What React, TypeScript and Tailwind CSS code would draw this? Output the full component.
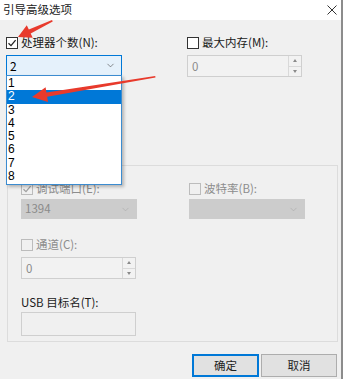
import { ChevronDown } from 'lucide-react';

const ui = { fontFamily: '"Noto Sans CJK SC", "Noto Sans", sans-serif' };

function Box({ checked, disabled }: { checked?: boolean; disabled?: boolean }) {
  return (
    <span
      className={`w-[12px] h-[12px] shrink-0 border flex items-center justify-center ${
        disabled ? 'border-[#bcbcbc] bg-[#f0f0f0]' : 'border-[#333] bg-white'
      }`}
    >
      {checked && (
        <svg width="10" height="10" viewBox="0 0 10 10">
          <path d="M1.5 5.2 L4 7.6 L8.6 2.2" fill="none" stroke={disabled ? '#a0a0a0' : '#222'} strokeWidth="1.3" />
        </svg>
      )}
    </span>
  );
}

function Check({ label, checked, disabled }: { label: string; checked?: boolean; disabled?: boolean }) {
  return (
    <div className="flex items-center gap-[3px] h-[12px]">
      <Box checked={checked} disabled={disabled} />
      <span className={`text-[11.5px] leading-none ${disabled ? 'text-[#8d8d8d]' : 'text-[#1a1a1a]'}`}>{label}</span>
    </div>
  );
}

function Spinner({ value }: { value: string }) {
  return (
    <div className="w-[115px] h-[22px] border border-[#cfcfcf] bg-[#f2f2f2] flex">
      <span className="flex-1 pl-[4px] text-[11.5px] leading-[20px] text-[#8a8a8a]">{value}</span>
      <div className="w-[13px] flex flex-col border-l border-[#d9d9d9]">
        <div className="flex-1 flex items-center justify-center border-b border-[#d9d9d9]">
          <span className="w-0 h-0 border-x-[2.5px] border-x-transparent border-b-[3px] border-b-[#8a8a8a]" />
        </div>
        <div className="flex-1 flex items-center justify-center">
          <span className="w-0 h-0 border-x-[2.5px] border-x-transparent border-t-[3px] border-t-[#8a8a8a]" />
        </div>
      </div>
    </div>
  );
}

function DisabledCombo({ value }: { value: string }) {
  return (
    <div className="w-[116px] h-[20px] bg-[#cccccc] flex items-center justify-between pl-[4px] pr-[6px]">
      <span className="text-[11.5px] text-[#8a8a8a]">{value}</span>
      <ChevronDown size={11} strokeWidth={1.3} color="#a8a8a8" />
    </div>
  );
}

function Arrow({ x, y, angle, len, head, half }: { x: number; y: number; angle: number; len: number; head: number; half: number }) {
  const pts = `0,0 ${head},${-half} ${head},${-2.2} ${len},${-0.8} ${len},0.8 ${head},2.2 ${head},${half}`;
  return <polygon points={pts} fill="#e83a2c" transform={`translate(${x} ${y}) rotate(${angle})`} />;
}

export default function App() {
  const items = ['1', '2', '3', '4', '5', '6', '7', '8'];
  return (
    <div className="relative w-[343px] h-[379px] bg-[#f0f0f0] overflow-hidden border-r-2 border-[#8c8c8c]" style={ui}>
      <div className="h-[20px] bg-white flex items-center justify-between pl-[3px] pr-[4px]">
        <span className="text-[11.5px] text-[#222]">引导高级选项</span>
        <svg width="10" height="10" viewBox="0 0 10 10">
          <path d="M0.5 0.5 L9.5 9.5 M9.5 0.5 L0.5 9.5" stroke="#333" strokeWidth="1" />
        </svg>
      </div>

      <div className="pl-[6px] pt-[17px] flex gap-[65px]">
        <div className="flex flex-col gap-[6px]">
          <Check label="处理器个数(N):" checked />
          <div className="w-[116px] h-[21px] border border-[#0078d7] bg-[#e5f1fb] flex items-center justify-between pl-[3px] pr-[5px]">
            <span className="text-[12px] text-black">2</span>
            <ChevronDown size={11} strokeWidth={1.3} color="#444" />
          </div>
        </div>
        <div className="flex flex-col gap-[6px]">
          <Check label="最大内存(M):" />
          <Spinner value="0" />
        </div>
      </div>

      <div className="ml-[7px] mt-[88px] w-[331px] h-[177px] border border-[#dcdcdc] pl-[13px] pt-[17px]">
        <div className="flex gap-[52px]">
          <div className="flex flex-col gap-[4px]">
            <Check label="调试端口(E):" checked disabled />
            <DisabledCombo value="1394" />
          </div>
          <div className="flex flex-col gap-[4px]">
            <Check label="波特率(B):" disabled />
            <DisabledCombo value="" />
          </div>
        </div>
        <div className="mt-[20px] flex flex-col gap-[6px]">
          <Check label="通道(C):" disabled />
          <Spinner value="0" />
        </div>
        <div className="mt-[17px] flex flex-col gap-[3px]">
          <span className="text-[11.5px] leading-[13px] text-[#1a1a1a]">USB 目标名(T):</span>
          <div className="w-[115px] h-[24px] border border-[#cfcfcf] bg-[#f0f0f0]" />
        </div>
      </div>

      <div className="mt-[12px] mr-[4px] flex justify-end gap-[2px]">
        <button className="w-[67px] h-[23px] border-2 border-[#0078d7] bg-[#e1e1e1] text-[11.5px] text-[#222]">确定</button>
        <button className="w-[76px] h-[23px] border border-[#adadad] bg-[#e1e1e1] text-[11.5px] text-[#222]">取消</button>
      </div>

      <div className="absolute left-[6px] top-[75px] w-[116px] h-[110px] border border-[#3c8cd0] bg-white shadow-[2px_2px_3px_rgba(0,0,0,0.25)] flex flex-col py-[1px] font-['Liberation_Sans',sans-serif]">
        {items.map((n) => (
          <div
            key={n}
            className={`h-[13.5px] pl-[1px] text-[12px] leading-[13.5px] overflow-hidden ${n === '2' ? 'bg-[#0078d7] text-white' : 'text-black'}`}
          >
            {n}
          </div>
        ))}
      </div>

      <svg className="absolute left-0 top-0 pointer-events-none" width="343" height="379">
        <Arrow x={18} y={37} angle={-25.2} len={38} head={13} half={7} />
        <Arrow x={32} y={97} angle={-9.3} len={125} head={15} half={7.5} />
      </svg>
    </div>
  );
}
